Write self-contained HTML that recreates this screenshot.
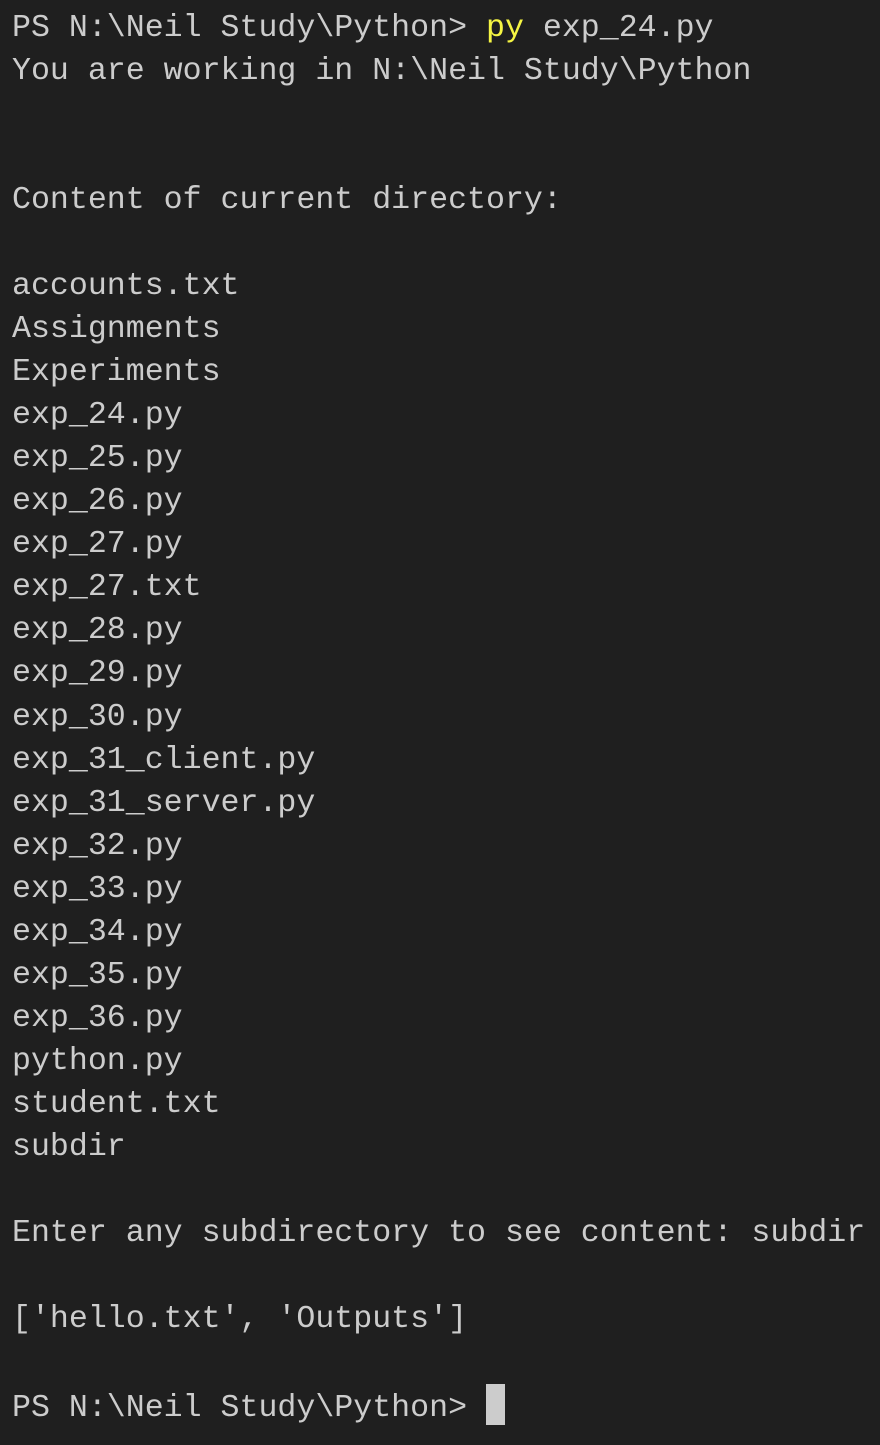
<!DOCTYPE html>
<html><head><meta charset="utf-8"><style>
html,body{margin:0;padding:0;background:#1f1f1f;}
body{width:880px;height:1445px;overflow:hidden;}
pre{margin:0;padding:7px 0 0 12px;font-family:"Liberation Mono","DejaVu Sans Mono",monospace;font-size:31.6px;line-height:43.03px;color:#cccccc;white-space:pre;}
.y{color:#f5f543;}
.cur{display:inline-block;width:19px;height:41px;background:#cccccc;vertical-align:-9px;}
</style></head><body><pre>PS N:\Neil Study\Python&gt; <span class="y">py</span> exp_24.py
You are working in N:\Neil Study\Python


Content of current directory:

accounts.txt
Assignments
Experiments
exp_24.py
exp_25.py
exp_26.py
exp_27.py
exp_27.txt
exp_28.py
exp_29.py
exp_30.py
exp_31_client.py
exp_31_server.py
exp_32.py
exp_33.py
exp_34.py
exp_35.py
exp_36.py
python.py
student.txt
subdir

Enter any subdirectory to see content: subdir

['hello.txt', 'Outputs']

PS N:\Neil Study\Python&gt; <span class="cur"></span></pre></body></html>
